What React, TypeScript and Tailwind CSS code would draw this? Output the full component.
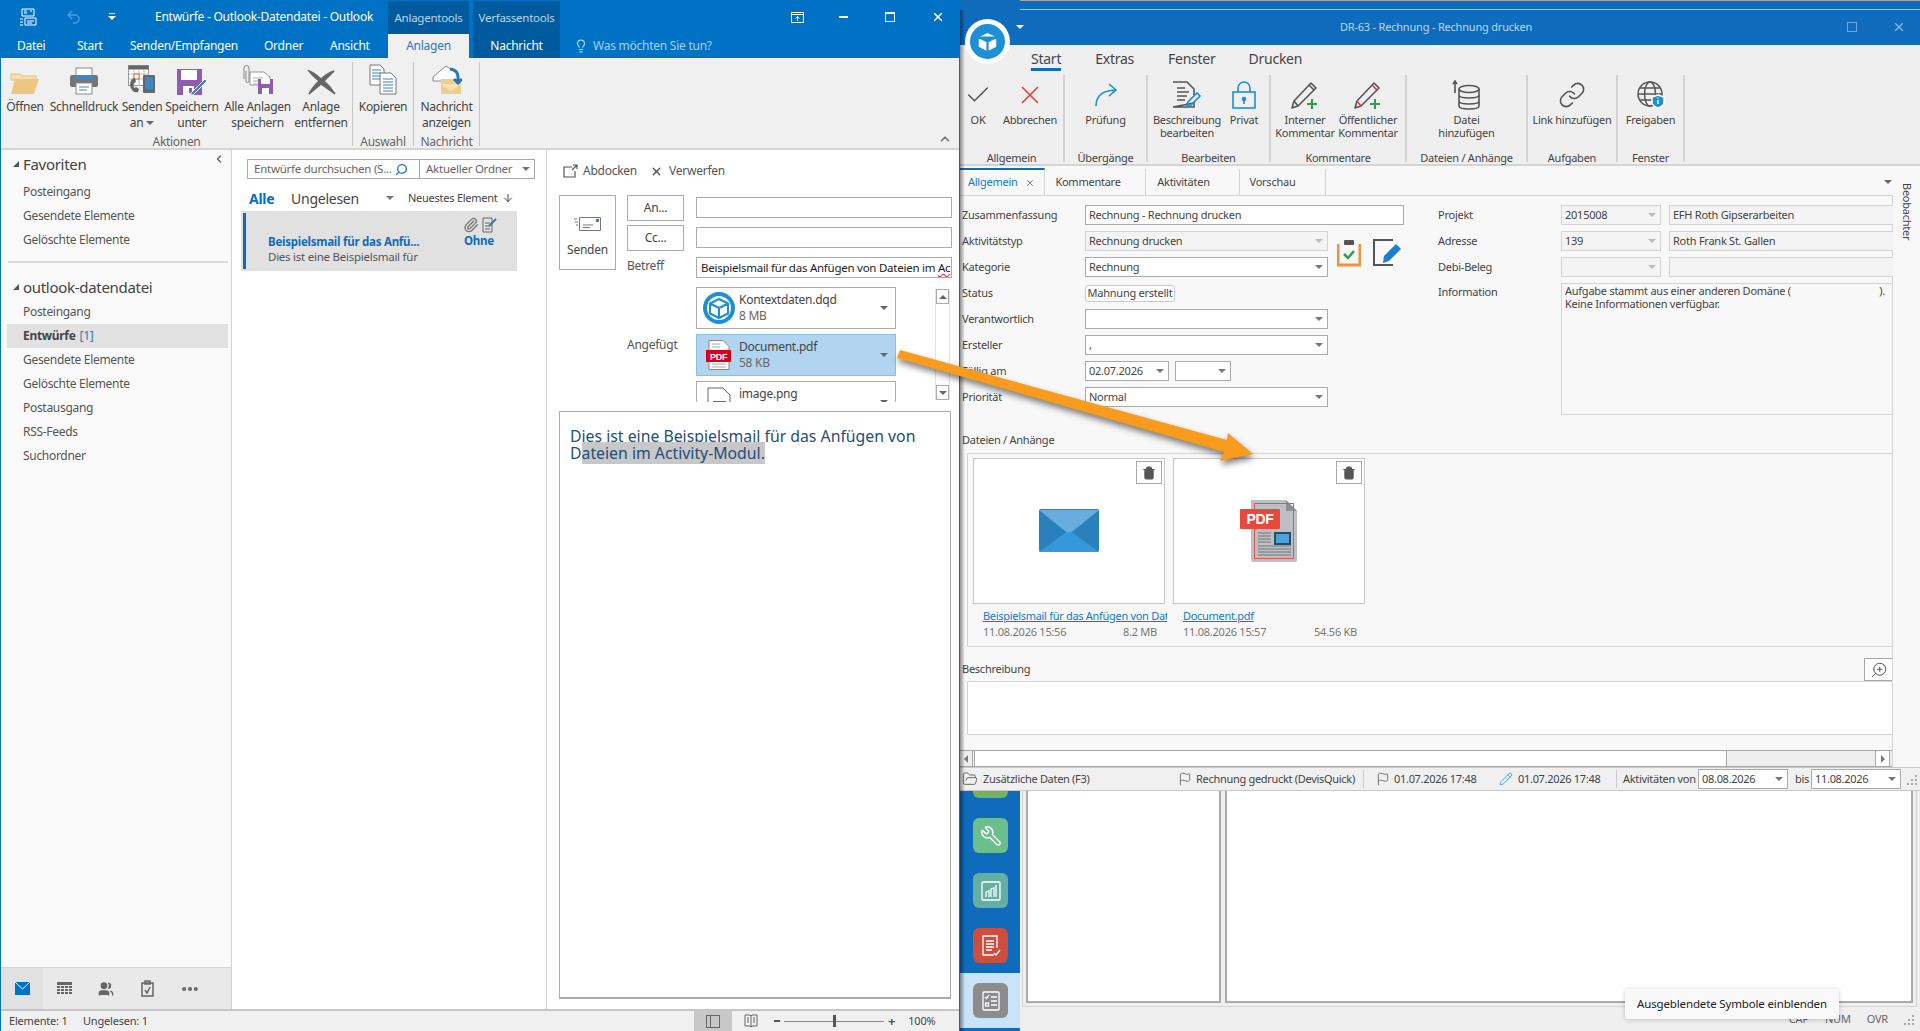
import type { ReactNode } from 'react';
import { Check, X, Wrench, Paperclip, Search, Lightbulb, Link, Trash2, ZoomIn, Flag, FolderOpen, Pencil, ArrowDown, ChevronUp, ChevronLeft, Users, Ellipsis } from 'lucide-react';

function Caret({ className = 'fill-[#666]' }: { className?: string }) {
  return (
    <svg width="8" height="4" viewBox="0 0 8 4" className={`shrink-0 ${className}`}>
      <path d="M0 0h8L4 4z" />
    </svg>
  );
}

function CubeLogo({ size, ring = 'white' }: { size: number; ring?: string }) {
  return (
    <svg width={size} height={size} viewBox="0 0 32 32">
      <circle cx="16" cy="16" r="14" fill={ring} stroke="#1d8fd6" strokeWidth="4" />
      <path d="M16 7l9 4.5v10L16 26l-9-4.5v-10zM7 11.5l9 4.5 9-4.5M16 16v10" fill="white" stroke="#1d8fd6" strokeWidth="2" strokeLinejoin="round" />
    </svg>
  );
}

function Grip() {
  return (
    <svg width="11" height="11" viewBox="0 0 11 11" className="shrink-0 fill-[#aaa]">
      <path d="M8 1h2v2H8zM4 5h2v2H4zM8 5h2v2H8zM0 9h2v2H0zM4 9h2v2H4zM8 9h2v2H8z" />
    </svg>
  );
}

function PdfFile() {
  return (
    <svg width="26" height="30" viewBox="0 0 26 30">
      <path d="M3 .5h14l6 6v23H3z" fill="white" stroke="#888" />
      <path d="M6 24h14M6 27h14M6 4h8M6 7h8" stroke="#aaa" />
      <rect y="10" width="25" height="12" fill="#d8001e" />
      <text x="12.5" y="19.500" fontSize="9" fontWeight="700" fill="white" textAnchor="middle" fontFamily="Liberation Sans">PDF</text>
    </svg>
  );
}

function PdfBig() {
  return (
    <svg width="58" height="62" viewBox="0 0 58 62">
      <path d="M11 0h35l11 11v49a2 2 0 0 1-2 2H13a2 2 0 0 1-2-2z" fill="#bcc0c5" />
      <path d="M46 0l11 11H46z" fill="#8b8f94" />
      <rect x="14.500" y="3.500" width="39" height="55" fill="none" stroke="#e2574c" />
      <rect y="9" width="40" height="20" rx="1" fill="#e8493d" />
      <text x="20" y="24" fontSize="14" fontWeight="700" fill="white" textAnchor="middle" fontFamily="Liberation Sans">PDF</text>
      <rect x="34" y="32" width="17" height="13" fill="#35495e" />
      <rect x="36" y="34" width="13" height="9" fill="#4ba3dc" />
      <path d="M18 33h13M18 36h13M18 39h13M18 42h13M18 46h33M18 49h33M18 52h33M18 55h33" stroke="#8b8f94" strokeWidth="1.300" />
    </svg>
  );
}

function MailBig() {
  return (
    <svg width="60" height="44" viewBox="0 0 60 44">
      <rect width="60" height="43" rx="2" fill="#2980ba" />
      <path d="M0 43L30 21l30 22z" fill="#3498db" />
      <path d="M0 1h60L34 22q-4 3-8 0z" fill="#67aedf" />
    </svg>
  );
}

// Outlook ribbon icons
function IcoFolder() {
  return (
    <svg width="30" height="24" viewBox="0 0 30 24">
      <path d="M1 6V3h9l2 2h14v4H1z" fill="#f7dfae" stroke="#e2c07f" />
      <path d="M5 8h24l-5 15H1z" fill="#eec683" />
    </svg>
  );
}
function IcoPrinter() {
  return (
    <svg width="30" height="28" viewBox="0 0 30 28">
      <rect x="7" y="1" width="16" height="9" fill="white" stroke="#888" />
      <rect x="1" y="8" width="28" height="12" rx="2" fill="#767676" />
      <rect x="6" y="8" width="18" height="4" fill="#3f86c5" />
      <rect x="7" y="16" width="16" height="11" fill="white" stroke="#888" />
      <path d="M10 20h10M10 23h8" stroke="#3f86c5" />
    </svg>
  );
}
function IcoSendTo() {
  return (
    <svg width="28" height="30" viewBox="0 0 28 30">
      <rect x=".5" y=".5" width="20" height="20" fill="white" stroke="#999" />
      <rect x=".5" y=".5" width="20" height="4" fill="#666" />
      <path d="M6 4v17M11 4v17M16 4v17M1 9h20M1 14h20" stroke="#bbb" />
      <rect x="6" y="9" width="5" height="5" fill="white" stroke="#d5662a" />
      <path d="M4 14q-4 6 0 11 2 3 6 2l1-3-3-2-2 1q-1-3 0-5l2-1-1-4z" fill="#666" />
      <rect x="15" y="10" width="12" height="18" rx="1" fill="#666" />
      <rect x="17" y="12" width="8" height="12" fill="#3f86c5" />
    </svg>
  );
}
function IcoSaveAs() {
  return (
    <svg width="30" height="26" viewBox="0 0 30 26">
      <path d="M0 0h25v26H0z" fill="#8f5bb5" />
      <rect x="4" y="1" width="16" height="10" fill="white" />
      <rect x="6" y="17" width="11" height="9" fill="white" />
      <rect x="12" y="19" width="3" height="5" fill="#8f5bb5" />
      <path d="M14 24l14-14 2 2-14 14h-3z" fill="#3f7cc4" stroke="white" />
    </svg>
  );
}
function IcoSaveAll() {
  return (
    <svg width="32" height="30" viewBox="0 0 32 30">
      <path d="M8 7h14l6 5v8H8z" fill="white" stroke="#999" />
      <path d="M11 13h10M11 16h8M11 19h8" stroke="#aaa" />
      <path d="M2 14V3a2.500 2.500 0 0 1 5 0v13a1.500 1.500 0 0 1-3 0V6" fill="none" stroke="#888" />
      <rect x="16" y="14" width="15" height="15" fill="#8f5bb5" />
      <rect x="19" y="14" width="9" height="5" fill="white" />
      <rect x="20" y="23" width="7" height="6" fill="white" />
    </svg>
  );
}
function IcoCross() {
  return (
    <svg width="30" height="26" viewBox="0 0 30 26">
      <path d="M3 2q4 1 12 8 7-6 13-8-4 4-10 10 6 5 11 13-7-5-14-10-7 6-12 10 3-6 10-13Q6 6 3 2z" fill="#666" stroke="#666" strokeWidth="1.500" />
    </svg>
  );
}
function IcoCopy() {
  return (
    <svg width="28" height="31" viewBox="0 0 28 31">
      <path d="M1 1h10l4 4v16H1z" fill="white" stroke="#777" />
      <path d="M3 6h9M3 9h9M3 12h9M3 15h9" stroke="#3f7cc4" />
      <path d="M11 9h11l5 5v16H11z" fill="white" stroke="#777" />
      <path d="M14 15h10M14 18h10M14 21h10M14 24h10M14 27h10" stroke="#3f7cc4" />
    </svg>
  );
}
function IcoEnvelope() {
  return (
    <svg width="30" height="30" viewBox="0 0 30 30">
      <path d="M1 12L14 1l12 8v7H1z" fill="white" stroke="#888" />
      <path d="M9 14h20v15H9z" fill="#f0cf8e" />
      <path d="M9 19l10 7 10-7" fill="#f7e2b6" />
      <path d="M18 4q8 1 8 8v5m-4-3l4 4 4-4" fill="none" stroke="#2e75b6" strokeWidth="3" />
    </svg>
  );
}

function OlBtn({ w, icon, lines }: { w: string; icon: ReactNode; lines: string[] }) {
  return (
    <div className={`flex flex-col items-center ${w}`}>
      <div className="flex h-[33px] items-end justify-center">{icon}</div>
      <div className="mt-[4px] text-center leading-[16px] whitespace-nowrap">
        {lines.map((l, i) => (
          <div key={i} className="flex items-center justify-center gap-[3px]">
            {l}
            {l === 'an' && <Caret className="fill-[#666]" />}
          </div>
        ))}
      </div>
    </div>
  );
}

function OlGroup({ label, w, children }: { label: string; w: string; children: ReactNode }) {
  return (
    <div className={`flex h-[84px] shrink-0 flex-col border-r border-[#c6c6c6] ${w}`}>
      <div className="flex flex-1">{children}</div>
      <div className="-mb-[3px] text-center leading-[14px] text-[#666]">{label}</div>
    </div>
  );
}

function OutlookRibbon() {
  return (
    <div className="flex h-[92px] shrink-0 items-start border-b-2 border-[#d4d4d4] bg-[#f0f0f0] pt-[4px] text-[12px] tracking-[-0.3px] text-[#444]">
      <OlGroup label="Aktionen" w="w-[352px]">
        <OlBtn w="w-[44px] ml-[2px]" icon={<IcoFolder />} lines={['Öffnen']} />
        <OlBtn w="w-[74px]" icon={<IcoPrinter />} lines={['Schnelldruck']} />
        <OlBtn w="w-[42px]" icon={<IcoSendTo />} lines={['Senden', 'an']} />
        <OlBtn w="w-[58px]" icon={<IcoSaveAs />} lines={['Speichern', 'unter']} />
        <OlBtn w="w-[73px]" icon={<IcoSaveAll />} lines={['Alle Anlagen', 'speichern']} />
        <OlBtn w="w-[54px]" icon={<IcoCross />} lines={['Anlage', 'entfernen']} />
      </OlGroup>
      <OlGroup label="Auswahl" w="w-[61px]">
        <OlBtn w="w-[60px]" icon={<IcoCopy />} lines={['Kopieren']} />
      </OlGroup>
      <OlGroup label="Nachricht" w="w-[66px]">
        <OlBtn w="w-[65px]" icon={<IcoEnvelope />} lines={['Nachricht', 'anzeigen']} />
      </OlGroup>
      <div className="flex h-[84px] flex-1 items-end justify-end pr-[7px]">
        <ChevronUp size={14} strokeWidth={3} className="text-[#777]" />
      </div>
    </div>
  );
}

function OutlookTitle() {
  return (
    <div className="flex h-[58px] shrink-0 flex-col bg-[#0072c6] text-[12px] tracking-[-0.25px] text-white">
      <div className="flex h-[34px] items-center">
        <svg width="18" height="18" viewBox="0 0 18 18" className="ml-[18px]" fill="none" stroke="white">
          <path d="M3 1h12v7H3zM5 3h3M5 5h3M11 3h2M1 11h3M1 14h3M1 17h3M6 10h11v7H6zM8 13h7M8 15h5" />
        </svg>
        <svg width="14" height="14" viewBox="0 0 14 14" className="ml-[30px]" fill="none" stroke="#4d9cd9" strokeWidth="1.500">
          <path d="M5 1L1 5l4 4M1 5h7a4 4 0 0 1 0 8H6" />
        </svg>
        <svg width="8" height="8" viewBox="0 0 8 8" className="ml-[27px]" fill="white">
          <path d="M1 0h6v1H1zM0 3h8L4 7z" />
        </svg>
        <div className="ml-[39px] w-[233px] whitespace-nowrap">Entwürfe - Outlook-Datendatei - Outlook</div>
        <div className="mt-[1px] flex h-[33px] w-[81px] items-center justify-center self-end bg-[#005a9e] text-[11.500px] text-[#bcd6ee]">Anlagentools</div>
        <div className="mt-[1px] ml-[4px] flex h-[33px] w-[87px] items-center justify-center self-end bg-[#005a9e] text-[11.500px] text-[#bcd6ee]">Verfassentools</div>
        <div className="flex flex-1 items-center">
          <svg width="13" height="11" viewBox="0 0 13 11" className="ml-[231px]" fill="none" stroke="white">
            <path d="M.5.500h12v10H.500zM.5 2.500h12M6.500 9V4.500M4.500 6.500l2-2 2 2" />
          </svg>
          <div className="ml-[35px] h-[2px] w-[9px] bg-white" />
          <div className="ml-[37px] h-[10px] w-[10px] border border-t-2 border-white" />
          <X size={14} strokeWidth={2.500} className="ml-[36px]" />
        </div>
      </div>
      <div className="flex h-[24px] items-center">
        <div className="ml-[16px] w-[60px]">Datei</div>
        <div className="w-[53px]">Start</div>
        <div className="w-[134px]">Senden/Empfangen</div>
        <div className="w-[66px]">Ordner</div>
        <div className="w-[58px]">Ansicht</div>
        <div className="flex h-full w-[81px] items-center justify-center bg-[#f0f0f0] text-[#2b79bd]">Anlagen</div>
        <div className="ml-[4px] flex h-full w-[87px] items-center justify-center bg-[#005a9e]">Nachricht</div>
        <Lightbulb size={14} className="ml-[14px] text-[#a8d0f0]" />
        <div className="ml-[5px] text-[#a8d0f0]">Was möchten Sie tun?</div>
      </div>
    </div>
  );
}

function NavRow({ label, active }: { label: string; active?: boolean }) {
  return (
    <div className={`ml-[6px] flex h-[24px] w-[221px] items-center pl-[16px] ${active ? 'bg-[#e1e1e1]' : ''}`}>
      {active ? (
        <>
          <span className="font-bold text-[#444]">{label}</span>
          <span className="ml-[4px] text-[#2b79bd]">[1]</span>
        </>
      ) : (
        label
      )}
    </div>
  );
}

function NavHeader({ label }: { label: string }) {
  return (
    <div className="flex h-[24px] items-center pl-[12px] text-[15px] text-[#444]">
      <svg width="6" height="6" viewBox="0 0 6 6" className="mr-[4px] fill-[#555]">
        <path d="M6 0v6H0z" />
      </svg>
      {label}
    </div>
  );
}

function NavPane() {
  return (
    <div className="flex w-[231px] shrink-0 flex-col border-r border-[#d4d4d4] bg-[#fafafa] text-[12px] tracking-[-0.3px] text-[#555]">
      <div className="flex-1">
        <div className="relative mt-[2px] mb-[4px]">
          <NavHeader label="Favoriten" />
          <ChevronLeft size={12} strokeWidth={3} className="absolute top-[1px] left-[212px] text-[#666]" />
        </div>
        <NavRow label="Posteingang" />
        <NavRow label="Gesendete Elemente" />
        <NavRow label="Gelöschte Elemente" />
        <div className="mt-[9px] mb-[12px] ml-[7px] w-[220px] border-t-2 border-[#dcdcdc]" />
        <div className="mb-[1px]">
          <NavHeader label="outlook-datendatei" />
        </div>
        <NavRow label="Posteingang" />
        <NavRow label="Entwürfe" active />
        <NavRow label="Gesendete Elemente" />
        <NavRow label="Gelöschte Elemente" />
        <NavRow label="Postausgang" />
        <NavRow label="RSS-Feeds" />
        <NavRow label="Suchordner" />
      </div>
      <div className="flex h-[42px] shrink-0 items-center border-t border-[#d4d4d4] bg-[#e9e9e9] text-[#666]">
        <div className="flex h-full w-[42px] items-center justify-center bg-[#e1e1e1]">
          <svg width="15" height="13" viewBox="0 0 15 13">
            <rect width="15" height="13" fill="#0072c6" />
            <path d="M0 0l7.500 7L15 0" fill="none" stroke="white" />
          </svg>
        </div>
        <svg width="15" height="13" viewBox="0 0 15 13" className="ml-[14px]" fill="#666">
          <path d="M0 0h15v3H0zM0 4h3v2H0zM4 4h3v2H4zM8 4h3v2H8zM12 4h3v2h-3zM0 7h3v2H0zM4 7h3v2H4zM8 7h3v2H8zM12 7h3v2h-3zM0 10h3v2H0zM4 10h3v2H4zM8 10h3v2H8zM12 10h3v2h-3z" />
        </svg>
        <Users size={16} fill="#666" className="ml-[26px] text-[#666]" />
        <svg width="13" height="17" viewBox="0 0 13 17" className="ml-[27px]" fill="none" stroke="#666" strokeWidth="1.500">
          <path d="M1 3h11v13H1zM4 1h5v3H4z" fill="none" />
          <path d="M4 10l2 3 3-6" />
        </svg>
        <Ellipsis size={20} strokeWidth={3} className="ml-[26px]" />
      </div>
    </div>
  );
}

function MailList() {
  return (
    <div className="flex w-[315px] shrink-0 flex-col border-r border-[#d4d4d4] bg-white text-[12px] tracking-[-0.25px] text-[#555]">
      <div className="mt-[9px] ml-[15px] flex h-[20px] w-[288px] border border-[#a8a8b0] text-[11.500px] text-[#666]">
        <div className="flex w-[172px] items-center border-r border-[#a8a8b0] pl-[6px]">
          <span className="flex-1 whitespace-nowrap">Entwürfe durchsuchen (S...</span>
          <Search size={13} strokeWidth={2.500} className="mr-[11px] -scale-x-100 text-[#2b79bd]" />
        </div>
        <div className="flex flex-1 items-center pl-[6px]">
          <span className="flex-1">Aktueller Ordner</span>
          <Caret className="mr-[4px] fill-[#777]" />
        </div>
      </div>
      <div className="mt-[9px] ml-[17px] flex h-[20px] items-center">
        <span className="w-[42px] text-[14px] font-bold text-[#0072c6]">Alle</span>
        <span className="w-[95px] text-[14px] text-[#444]">Ungelesen</span>
        <Caret className="fill-[#777]" />
        <span className="ml-[14px] text-[11px] text-[#444]">Neuestes Element</span>
        <ArrowDown size={12} className="ml-[4px] text-[#444]" />
      </div>
      <div className="mt-[3px] ml-[9px] flex h-[60px] w-[276px] bg-[#e1e1e1] py-[2px] pl-[2px]">
        <div className="w-[3px] bg-[#0f6cbd]" />
        <div className="flex-1 pt-[21px] pl-[22px]">
          <div className="text-[11.500px] leading-[15px] font-bold text-[#0f6cbd]">Beispielsmail für das Anfü...</div>
          <div className="text-[11.500px] leading-[15px] whitespace-nowrap">Dies ist eine Beispielsmail für</div>
        </div>
        <div className="flex w-[53px] flex-col items-start pt-[3px]">
          <div className="ml-[-1px] flex h-[17px] items-center gap-[3px] text-[#777]">
            <Paperclip size={16} />
            <svg width="16" height="16" viewBox="0 0 16 16" fill="none" stroke="#666">
              <path d="M1 1h9v14H1z" />
              <path d="M3 6h5M3 9h5M3 12h5" />
              <path d="M7 9l7-7" stroke="#2b79bd" strokeWidth="2" />
            </svg>
          </div>
          <div className="text-[11.500px] leading-[15px] font-bold text-[#0f6cbd]">Ohne</div>
        </div>
      </div>
    </div>
  );
}

function AttachmentCard({ icon, name, size, active }: { icon: ReactNode; name: string; size?: string; active?: boolean }) {
  return (
    <div className={`flex h-[42px] shrink-0 items-center border ${active ? 'border-[#8cbfe6] bg-[#b1d5f0]' : 'border-[#ababab] bg-white'}`}>
      <div className="flex w-[42px] justify-center pl-[2px]">{icon}</div>
      <div className="flex-1 text-[12px] leading-[16px] text-[#444]">
        <div>{name}</div>
        <div className="min-h-[16px] text-[#666]">{size}</div>
      </div>
      <Caret className="mr-[7px] fill-[#666]" />
    </div>
  );
}

function ReadingPane() {
  return (
    <div className="flex flex-1 flex-col bg-white pl-[12px] text-[12px] tracking-[-0.25px] text-[#555]">
      <div className="flex h-[45px] shrink-0 items-center pb-[3px] pl-[4px]">
        <svg width="15" height="14" viewBox="0 0 15 14" fill="none" stroke="#555" strokeWidth="1.200">
          <path d="M9 3H1v10h11V7M10 1h4v4M14 1L9 6" />
        </svg>
        <span className="ml-[5px]">Abdocken</span>
        <X size={13} strokeWidth={2.500} className="ml-[13px] text-[#555]" />
        <span className="ml-[6px]">Verwerfen</span>
      </div>
      <div className="flex h-[207px] shrink-0">
        <div className="flex h-[75px] w-[57px] flex-col items-center border border-[#ababab] pt-[21px]">
          <svg width="27" height="14" viewBox="0 0 27 14" fill="none" stroke="#777">
            <path d="M5.500.500h21v13h-21zM9 8h10M9 10.500h7M0 2h3M1 5h3M2 8h2" />
            <rect x="22" y="2" width="3" height="3" fill="#3f7cc4" stroke="none" />
          </svg>
          <span className="mt-[10px] text-[#444]">Senden</span>
        </div>
        <div className="ml-[11px] flex w-[69px] shrink-0 flex-col">
          <div className="flex h-[26px] w-[57px] items-center justify-center border border-[#ababab] text-[#444]">An...</div>
          <div className="mt-[4px] flex h-[26px] w-[57px] items-center justify-center border border-[#ababab] text-[#444]">Cc...</div>
          <div className="mt-[6px]">Betreff</div>
          <div className="mt-[61px]">Angefügt</div>
        </div>
        <div className="mt-[2px] w-[256px] shrink-0">
          <div className="h-[21px] border border-[#ababab]" />
          <div className="mt-[9px] h-[21px] border border-[#ababab]" />
          <div className="mt-[9px] flex h-[21px] items-center overflow-hidden border border-[#ababab] pl-[4px] text-[11.500px] whitespace-nowrap text-[#222]">
            <span>Beispielsmail für das Anfügen von Dateien im <span className="underline decoration-red-500 decoration-wavy">Ac</span></span>
          </div>
          <div className="mt-[9px] flex h-[115px]">
            <div className="flex w-[200px] flex-col gap-[5px] overflow-hidden">
              <AttachmentCard icon={<CubeLogo size={32} />} name="Kontextdaten.dqd" size="8 MB" />
              <AttachmentCard icon={<PdfFile />} name="Document.pdf" size="58 KB" active />
              <AttachmentCard
                icon={
                  <svg width="24" height="30" viewBox="0 0 24 30">
                    <path d="M1 1h15l7 7v21H1z" fill="white" stroke="#666" />
                    <rect x="6" y="14" width="13" height="9" fill="#2b79bd" />
                  </svg>
                }
                name="image.png"
              />
            </div>
            <div className="mt-[2px] ml-[39px] flex h-[111px] w-[15px] flex-col justify-between border-x border-[#e4e4e4]">
              <div className="flex h-[15px] items-center justify-center border border-[#ababab] bg-white"><Caret className="rotate-180 fill-[#666]" /></div>
              <div className="flex h-[15px] items-center justify-center border border-[#ababab] bg-white"><Caret className="fill-[#666]" /></div>
            </div>
          </div>
        </div>
      </div>
      <div className="mt-[9px] h-[588px] w-[392px] border border-b-2 border-[#ababab] pt-[16px] pl-[10px] text-[15.800px] leading-[17px] tracking-normal text-[#1f4e79]">
        <div>Dies ist eine Beispielsmail für das Anfügen von</div>
        <div>
          D<span className="bg-[#c8c8c8]">ateien im Activity-Modul.</span>
        </div>
      </div>
    </div>
  );
}

function OutlookStatus() {
  return (
    <div className="flex h-[22px] shrink-0 items-center border-t-2 border-[#c6c6c6] bg-[#f0f0f0] text-[11px] tracking-[-0.2px] text-[#444]">
      <span className="ml-[8px] w-[74px]">Elemente: 1</span>
      <span className="w-[611px]">Ungelesen: 1</span>
      <div className="flex h-full w-[38px] items-center justify-center bg-[#c8c8c8]">
        <div className="flex h-[13px] w-[14px] border border-[#666]"><div className="w-[4px] border-r border-[#666]" /></div>
      </div>
      <svg width="14" height="14" viewBox="0 0 14 14" className="ml-[12px]" fill="none" stroke="#666">
        <path d="M1 1h5l1 1 1-1h5v11H8l-1 1-1-1H1zM7 2v10M3 4h2M3 6h2M3 8h2M9 4h2M9 6h2M9 8h2" />
      </svg>
      <div className="ml-[16px] h-[2px] w-[6px] bg-[#555]" />
      <div className="relative ml-[4px] h-[1px] w-[100px] bg-[#888]">
        <div className="absolute -top-[6px] left-[49px] h-[12px] w-[3px] bg-[#555]" />
      </div>
      <span className="ml-[4px] text-[13px] leading-none font-bold text-[#555]">+</span>
      <span className="ml-[13px]">100%</span>
    </div>
  );
}

function OutlookWindow() {
  return (
    <div className="flex h-full w-[960px] shrink-0 flex-col border-x border-[#0072c6]">
      <OutlookTitle />
      <OutlookRibbon />
      <div className="flex min-h-0 flex-1">
        <NavPane />
        <MailList />
        <ReadingPane />
      </div>
      <OutlookStatus />
    </div>
  );
}

// Right window
function RGroup({ label, w, children }: { label: string; w: string; children: ReactNode }) {
  return (
    <div className={`flex h-[87px] shrink-0 flex-col border-r-2 border-[#d4d4d4] ${w}`}>
      <div className="flex flex-1">{children}</div>
      <div className="-mb-[3px] text-center leading-[14px] text-[#444]">{label}</div>
    </div>
  );
}

function RBtn({ w, icon, lines }: { w: string; icon: ReactNode; lines: string[] }) {
  return (
    <div className={`flex shrink-0 flex-col items-center pt-[5px] ${w}`}>
      <div className="flex h-[30px] items-center justify-center">{icon}</div>
      <div className="mt-[3px] text-center leading-[13px] whitespace-nowrap">
        {lines.map((l) => (
          <div key={l}>{l}</div>
        ))}
      </div>
    </div>
  );
}

function PencilPlus({ red }: { red?: boolean }) {
  return (
    <svg width="30" height="30" viewBox="0 0 30 30" fill="none">
      <path d="M2 28l2-7L21 3l5 5L8 26z" stroke="#555" strokeWidth="1.600" strokeLinejoin="round" />
      <path d="M4 21l4 5" stroke={red ? '#e33' : '#555'} strokeWidth="1.600" />
      <path d="M19 5l5 5" stroke={red ? '#e33' : '#555'} strokeWidth="1.600" />
      <path d="M22 19v10M17 24h10" stroke="#2f9e4f" strokeWidth="2" />
    </svg>
  );
}

function AppRibbon() {
  return (
    <div className="flex h-[91px] shrink-0 border-b-2 border-[#d4d4d4] bg-[#efefef] text-[11px] tracking-[-0.25px] text-[#444]">
      <RGroup label="Allgemein" w="w-[105px]">
        <RBtn w="w-[36px]" icon={<Check size={28} strokeWidth={1.300} className="text-[#555]" />} lines={['OK']} />
        <RBtn w="w-[68px]" icon={<X size={30} strokeWidth={1.300} className="text-[#e8403a]" />} lines={['Abbrechen']} />
      </RGroup>
      <RGroup label="Übergänge" w="w-[83px]">
        <RBtn w="w-[81px]" icon={
          <svg width="24" height="24" viewBox="0 0 24 24" fill="none" stroke="#1d8fd6" strokeWidth="1.600">
            <path d="M2 23Q2 8 21 7M15 1l7 6-7 6" />
          </svg>
        } lines={['Prüfung']} />
      </RGroup>
      <RGroup label="Bearbeiten" w="w-[123px]">
        <RBtn w="w-[78px]" icon={
          <svg width="30" height="28" viewBox="0 0 30 28" fill="none">
            <path d="M1 1h14l7 7v6M22 22v4H1z" stroke="#555" strokeWidth="1.600" />
            <path d="M5 7h8M5 11h12M5 15h10M5 19h8" stroke="#555" strokeWidth="1.400" />
            <path d="M14 26l2-5 9-9 3 3-9 9z" stroke="#1d8fd6" strokeWidth="1.600" />
          </svg>
        } lines={['Beschreibung', 'bearbeiten']} />
        <RBtn w="w-[36px]" icon={
          <svg width="24" height="28" viewBox="0 0 24 28" fill="none" stroke="#1d8fd6" strokeWidth="1.600">
            <rect x="1" y="11" width="22" height="16" />
            <path d="M6 11V7a6 6 0 0 1 12 0v4" />
            <circle cx="12" cy="18" r="1.500" fill="#1d8fd6" />
            <path d="M12 19v4" />
          </svg>
        } lines={['Privat']} />
      </RGroup>
      <RGroup label="Kommentare" w="w-[136px]">
        <RBtn w="w-[68px]" icon={<PencilPlus />} lines={['Interner', 'Kommentar']} />
        <RBtn w="w-[58px]" icon={<PencilPlus red />} lines={['Öffentlicher', 'Kommentar']} />
      </RGroup>
      <RGroup label="Dateien / Anhänge" w="w-[121px]">
        <RBtn w="w-[119px]" icon={
          <svg width="30" height="30" viewBox="0 0 30 30" fill="none" stroke="#555" strokeWidth="1.600">
            <path d="M3 13V2M1 4l2-3 2 3" />
            <ellipse cx="17" cy="9" rx="10" ry="3.500" />
            <path d="M7 9v17c0 4 20 4 20 0V9M7 15c0 4 20 4 20 0M7 21c0 4 20 4 20 0" />
          </svg>
        } lines={['Datei', 'hinzufügen']} />
      </RGroup>
      <RGroup label="Aufgaben" w="w-[90px]">
        <RBtn w="w-[88px]" icon={<Link size={28} strokeWidth={1.400} className="text-[#555]" />} lines={['Link hinzufügen']} />
      </RGroup>
      <RGroup label="Fenster" w="w-[67px]">
        <RBtn w="w-[65px]" icon={
          <svg width="28" height="28" viewBox="0 0 28 28" fill="none" stroke="#555" strokeWidth="1.500">
            <circle cx="13" cy="13" r="12" />
            <ellipse cx="13" cy="13" rx="5.500" ry="12" />
            <path d="M1 13h24M3 7h20M3 19h20" />
            <path d="M21 14l6 2v5q0 4-6 6-6-2-6-6v-5z" fill="#1d8fd6" stroke="white" />
            <path d="M21 19v4M21 16.500v1" stroke="white" />
          </svg>
        } lines={['Freigaben']} />
      </RGroup>
    </div>
  );
}

function Field({ w, value, caret, muted, className = '' }: { w: string; value?: string; caret?: boolean; muted?: boolean; className?: string }) {
  return (
    <div className={`flex h-[20px] shrink-0 items-center border px-[3px] whitespace-nowrap ${w} ${muted ? 'border-[#d4d4d4] bg-[#f4f4f4]' : 'border-[#ababab] bg-white'} ${className}`}>
      <span className="flex-1 overflow-hidden">{value}</span>
      {caret && <Caret className={muted ? 'mr-[1px] fill-[#bbb]' : 'mr-[1px] fill-[#777]'} />}
    </div>
  );
}

function Row({ label, children }: { label: string; children: ReactNode }) {
  return (
    <div className="flex h-[20px] items-center">
      <div className="w-[123px] shrink-0">{label}</div>
      {children}
    </div>
  );
}

function FileCard({ icon, name, date, size }: { icon: ReactNode; name: string; date: string; size: string }) {
  return (
    <div className="w-[192px] shrink-0">
      <div className="relative flex h-[146px] items-center justify-center border border-[#c8c8c8] bg-white">
        {icon}
        <div className="absolute top-[2px] right-[2px] flex h-[23px] w-[26px] items-center justify-center border border-[#a8a8a8] bg-white">
          <Trash2 size={14} fill="#555" className="text-[#555]" />
        </div>
      </div>
      <div className="mt-[4px] ml-[10px] w-[184px] overflow-hidden leading-[16px] tracking-[-0.3px] whitespace-nowrap text-[#0f7ad1] underline">{name}</div>
      <div className="ml-[10px] flex w-[174px] justify-between leading-[16px] text-[#777]">
        <span>{date}</span>
        <span>{size}</span>
      </div>
    </div>
  );
}

function FormArea() {
  return (
    <div className="flex h-[572px] shrink-0">
      <div className="flex w-[933px] flex-col border-t border-r border-[#d4d4d4] bg-[#f8f8f8] text-[11px] tracking-[-0.25px] text-[#444]">
        <div className="flex pt-[9px] pl-[2px]">
          <div className="flex w-[442px] flex-col gap-[6px]">
            <Row label="Zusammenfassung"><Field w="w-[319px]" value="Rechnung - Rechnung drucken" /></Row>
            <div className="flex">
              <div className="flex flex-col gap-[6px]">
                <Row label="Aktivitätstyp"><Field w="w-[243px]" value="Rechnung drucken" caret muted /></Row>
                <Row label="Kategorie"><Field w="w-[243px]" value="Rechnung" caret /></Row>
              </div>
              <div className="mt-[8px] ml-[9px] flex gap-[12px]">
                <svg width="24" height="28" viewBox="0 0 24 28" fill="none">
                  <path d="M1 5v21h22V5" stroke="#f0923a" strokeWidth="3" />
                  <rect x="7" y="1" width="10" height="5" rx="1" fill="#555" />
                  <path d="M7 15l4 4 6-7" stroke="#2f9e4f" strokeWidth="2.500" />
                </svg>
                <svg width="28" height="27" viewBox="0 0 28 27" fill="none">
                  <path d="M20 1H1v25h19" stroke="#555" strokeWidth="2" />
                  <path d="M10 24l1-7L23 5l5 5-12 12z" fill="#1d7fcc" />
                </svg>
              </div>
            </div>
            <Row label="Status">
              <div className="flex h-[17px] w-[90px] items-center justify-center rounded-[3px] border border-[#c5cde0] bg-white whitespace-nowrap">Mahnung erstellt</div>
            </Row>
            <Row label="Verantwortlich"><Field w="w-[243px]" caret /></Row>
            <Row label="Ersteller"><Field w="w-[243px]" value="," caret /></Row>
            <Row label="Fällig am">
              <Field w="w-[84px]" value="02.07.2026" caret />
              <Field w="w-[56px]" caret className="ml-[6px]" />
            </Row>
            <Row label="Priorität"><Field w="w-[243px]" value="Normal" caret /></Row>
          </div>
          <div className="ml-[34px] flex flex-1 flex-col gap-[6px]">
            <Row label="Projekt">
              <Field w="w-[100px]" value="2015008" caret muted />
              <Field w="w-[224px]" value="EFH Roth Gipserarbeiten" muted className="ml-[8px] border-r-0" />
            </Row>
            <Row label="Adresse">
              <Field w="w-[100px]" value="139" caret muted />
              <Field w="w-[224px]" value="Roth Frank St. Gallen" muted className="ml-[8px] border-r-0" />
            </Row>
            <Row label="Debi-Beleg">
              <Field w="w-[100px]" caret muted />
              <Field w="w-[224px]" muted className="ml-[8px] border-r-0" />
            </Row>
            <div className="flex">
              <div className="mt-[1px] w-[123px] shrink-0">Information</div>
              <div className="h-[132px] flex-1 border border-r-0 border-[#d4d4d4] px-[3px] leading-[13px]">
                <div className="flex w-[320px] justify-between"><span>Aufgabe stammt aus einer anderen Domäne (</span><span>).</span></div>
                <div>Keine Informationen verfügbar.</div>
              </div>
            </div>
          </div>
        </div>
        <div className="mt-[18px] pl-[2px] leading-[14px]">Dateien / Anhänge</div>
        <div className="mt-[6px] ml-[7px] flex h-[194px] gap-[8px] border border-r-0 border-[#d4d4d4] pt-[4px] pl-[5px]">
          <FileCard icon={<MailBig />} name="Beispielsmail für das Anfügen von Date" date="11.08.2026 15:56" size="8.2 MB" />
          <FileCard icon={<PdfBig />} name="Document.pdf" date="11.08.2026 15:57" size="54.56 KB" />
        </div>
        <div className="flex h-[34px] items-end justify-between pl-[2px]">
          <span className="mb-[5px] leading-[14px]">Beschreibung</span>
          <div className="flex h-[23px] w-[28px] items-center justify-center border border-r-0 border-[#a8a8a8] bg-white">
            <ZoomIn size={18} strokeWidth={1.300} className="-scale-x-100 text-[#555]" />
          </div>
        </div>
        <div className="ml-[7px] h-[54px] border border-r-0 border-[#d4d4d4] bg-white" />
        <div className="mt-[15px] flex h-[17px] border-y border-[#a8a8a8] bg-[#efefef]">
          <div className="flex w-[13px] items-center justify-center border-r border-[#a8a8a8]"><Caret className="rotate-90 fill-[#777]" /></div>
          <div className="ml-[1px] w-[753px] border-x border-[#a8a8a8] bg-white" />
          <div className="mr-[2px] ml-auto flex w-[15px] items-center justify-center border-x border-[#a8a8a8] bg-white"><Caret className="-rotate-90 fill-[#777]" /></div>
        </div>
      </div>
      <div className="flex w-[27px] justify-center bg-[#f8f8f8]">
        <div className="mt-[-12px] h-[54px] text-[11px] tracking-[-0.25px] text-[#444] [writing-mode:vertical-rl]">Beobachter</div>
      </div>
    </div>
  );
}

function AppStatus() {
  return (
    <div className="flex h-[24px] shrink-0 items-center border-y border-[#c8c8c8] bg-[#f0f0f0] text-[11px] tracking-[-0.3px] whitespace-nowrap text-[#444]">
      <FolderOpen size={16} strokeWidth={1.300} className="ml-[2px] text-[#555]" />
      <span className="ml-[5px] w-[195px]">Zusätzliche Daten (F3)</span>
      <Flag size={14} strokeWidth={1.300} className="text-[#555]" />
      <span className="ml-[4px] w-[167px]">Rechnung gedruckt (DevisQuick)</span>
      <div className="h-[18px] border-l border-[#ccc]" />
      <Flag size={14} strokeWidth={1.300} className="ml-[12px] text-[#555]" />
      <span className="ml-[4px] w-[105px]">01.07.2026 17:48</span>
      <Pencil size={14} strokeWidth={1.500} className="text-[#3f9ad9]" />
      <span className="ml-[5px] w-[98px]">01.07.2026 17:48</span>
      <div className="h-[18px] border-l border-[#ccc]" />
      <span className="ml-[6px] w-[75px]">Aktivitäten von</span>
      <Field w="w-[90px]" value="08.08.2026" caret />
      <span className="ml-[7px] w-[16px]">bis</span>
      <Field w="w-[90px]" value="11.08.2026" caret />
      <div className="ml-[6px]"><Grip /></div>
    </div>
  );
}

function SideTile({ bg, children }: { bg: string; children?: ReactNode }) {
  return <div className={`flex h-[35px] w-[35px] shrink-0 items-center justify-center rounded-[6px] ${bg}`}>{children}</div>;
}

function BottomArea() {
  return (
    <div className="flex min-h-0 flex-1">
      <div className="flex w-[60px] shrink-0 flex-col items-center overflow-hidden bg-[#0f6cbd]">
        <div className="-mt-[28px] flex flex-col gap-[20px] pl-[1px]">
          <SideTile bg="bg-[#76b25d]" />
          <SideTile bg="bg-[#6bbf8e]"><Wrench size={22} strokeWidth={1.500} className="-scale-x-100 text-white" /></SideTile>
          <SideTile bg="bg-[#63b0a2]">
            <svg width="20" height="20" viewBox="0 0 20 20" fill="none" stroke="white" strokeWidth="1.300">
              <rect x="1" y="1" width="18" height="18" rx="1" />
              <path d="M5 16v-5l3-1v6M10 16V8l3-1v9M15 16V4" />
            </svg>
          </SideTile>
          <SideTile bg="bg-[#cd4d3e]">
            <svg width="20" height="22" viewBox="0 0 20 22" fill="none" stroke="white" strokeWidth="1.300">
              <path d="M16 13V1H2a1 1 0 0 0 0 1v18h11" />
              <path d="M5 6h8M5 9h8M5 12h8M5 15h6M13 18l2 2 4-5" />
            </svg>
          </SideTile>
        </div>
        <div className="mt-[10px] flex h-[55px] w-full shrink-0 items-center justify-center bg-[#cbe3f7] pl-[1px]">
          <SideTile bg="bg-[#8c8c8e]">
            <svg width="18" height="20" viewBox="0 0 18 20" fill="none" stroke="white" strokeWidth="1.300">
              <rect x="1" y="1" width="16" height="18" rx="1" />
              <path d="M3 6l1.500 1.500L7 4M9 6h6M9 10h6M9 14h6" />
              <rect x="3.500" y="12" width="3" height="3" />
            </svg>
          </SideTile>
        </div>
      </div>
      <div className="flex flex-1 flex-col bg-[#efefef]">
        <div className="mr-[3px] ml-[2px] flex h-[216px] shrink-0 gap-[4px] border-r border-b border-l border-[#d4d4d4] pr-[3px] pb-[3px] pl-[3px]">
          <div className="w-[195px] border-x-2 border-b-2 border-[#ababab] bg-white" />
          <div className="flex-1 border-x-2 border-b-2 border-[#ababab] bg-white" />
        </div>
        <div className="flex flex-1 items-center justify-end gap-[16px] pr-[5px] text-[11px] tracking-[-0.2px] text-[#666]">
          <span>CAP</span>
          <span>NUM</span>
          <span>OVR</span>
          <Grip />
        </div>
      </div>
    </div>
  );
}

function AppWindow() {
  return (
    <div className="relative flex h-full flex-1 flex-col">
      <div className="flex h-[10px] shrink-0 bg-[#0f6cbd]">
        <div className="w-[60px]" />
        <div className="flex-1 border-t border-b border-t-[#9aa7b2] border-b-[#a9c8e6]" />
      </div>
      <div className="flex h-[35px] shrink-0 items-center justify-center bg-[#0f6cbd] pr-[8px] text-[11px] tracking-[-0.2px] text-[#bcd6ee]">
        DR-63 - Rechnung - Rechnung drucken
      </div>
      <div className="flex h-[30px] shrink-0 items-start bg-[#efefef] pl-[71px] text-[14px] tracking-[-0.25px] text-[#444]">
        <div className="mt-[5px] border-b-[3px] border-[#0f6cbd] leading-[18px] text-[#3a4a5a]">Start</div>
        <div className="mt-[5px] ml-[34px] leading-[18px]">Extras</div>
        <div className="mt-[5px] ml-[34px] leading-[18px]">Fenster</div>
        <div className="mt-[5px] ml-[33px] leading-[18px]">Drucken</div>
      </div>
      <AppRibbon />
      <div className="flex h-[29px] shrink-0 items-end bg-[#f8f8f8] text-[11px] tracking-[-0.25px] text-[#444]">
        <div className="flex h-[27px] w-[85px] items-center border-t-2 border-r border-t-[#0f6cbd] border-r-[#d4d4d4] pl-[8px] text-[#0f7ad1]">
          <span className="flex-1">Allgemein</span>
          <X size={10} className="mr-[9px] text-[#777]" />
        </div>
        <div className="flex h-[26px] w-[101px] items-center justify-center border-r border-[#d4d4d4] pr-[14px]">Kommentare</div>
        <div className="flex h-[26px] w-[94px] items-center justify-center border-r border-[#d4d4d4] pr-[18px]">Aktivitäten</div>
        <div className="flex h-[26px] w-[86px] items-center justify-center border-r border-[#d4d4d4] pr-[20px]">Vorschau</div>
        <div className="mb-[11px] ml-[558px]"><Caret className="fill-[#666]" /></div>
      </div>
      <FormArea />
      <AppStatus />
      <BottomArea />

      {/* logo, window buttons, shadow and the tray tooltip lie over the chrome */}
      <div className="absolute top-[19px] left-[5px] flex h-[45px] w-[45px] items-center justify-center rounded-full bg-white">
        <CubeLogo size={35} ring="#1d8fd6" />
      </div>
      <div className="absolute top-[25px] left-[56px]"><Caret className="fill-white" /></div>
      <div className="absolute top-[22px] left-[887px] h-[10px] w-[10px] border border-[#6fa5d8]" />
      <X size={14} className="absolute top-[20px] left-[932px] text-[#8fbbe3]" />
      <div className="absolute top-[10px] bottom-0 left-0 w-[5px] bg-gradient-to-r from-[#0000006b] to-transparent" />
      <div className="absolute bottom-[12px] left-[665px] flex h-[30px] w-[214px] items-center justify-center rounded-[3px] bg-[#f9f9f9] text-[11.500px] tracking-[-0.15px] text-[#222] shadow-[0_1px_5px_rgba(0,0,0,0.2)]">
        Ausgeblendete Symbole einblenden
      </div>
    </div>
  );
}

export default function App() {
  return (
    <div className="relative flex h-[1031px] w-[1920px] overflow-hidden bg-white font-['Noto_Sans',sans-serif]">
      <OutlookWindow />
      <AppWindow />
      {/* orange arrow on top of both windows */}
      <svg width="1920" height="1031" className="pointer-events-none absolute inset-0 drop-shadow-[1px_4px_3px_rgba(0,0,0,0.5)]">
        <polygon points="900,350 1227,440 1228,433 1253,454 1220,461 1224,452 897,358" fill="#f99b1c" />
      </svg>
    </div>
  );
}
